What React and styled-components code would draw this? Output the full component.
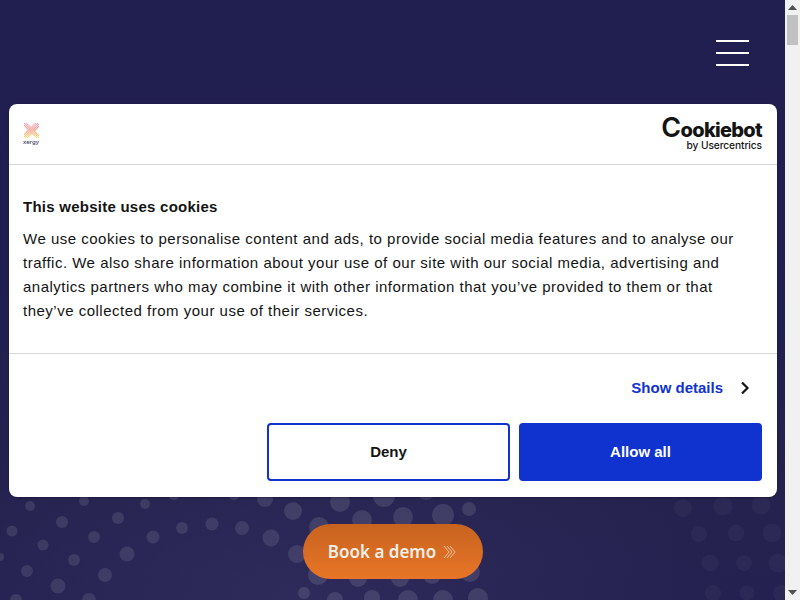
import React from "react";
import styled, { createGlobalStyle } from "styled-components";

const Global = createGlobalStyle`
  html, body { height: 100%; overflow: hidden; }
  body { margin: 0; background: #211f4f; font-family: "Liberation Sans", Arial, sans-serif; }
  #root { height: 100%; }
`;

const Window = styled.div`
  display: flex;
  height: 100%;
`;

const Viewport = styled.main`
  position: relative;
  flex: 1;
  min-width: 0;
  overflow: hidden;
`;

const ScrollBar = styled.aside`
  flex: none;
  width: 15px;
  display: flex;
  flex-direction: column;
  background: #f1f1f1;
`;

const ScrollArrow = styled.div`
  height: 15px;
  flex: none;
  display: flex;
  align-items: center;
  justify-content: center;
`;

const ScrollTrack = styled.div`
  flex: 1;
`;

const ScrollThumb = styled.div`
  width: 11px;
  height: 30px;
  margin: 0 auto;
  background: #c1c1c1;
`;

const Hero = styled.section`
  position: relative;
  height: 600px;
  overflow: hidden;
  display: flex;
  flex-direction: column;
  background:
    radial-gradient(ellipse 420px 190px at 300px 600px, #2e2b5b 0%, rgba(46, 43, 91, 0) 100%),
    linear-gradient(180deg, #211e50 0%, #211f4f 55%, #25224f 85%, #242150 100%);
`;

const DotsLayer = styled.svg`
  position: absolute;
  inset: 0;
  width: 100%;
  height: 100%;
`;

const TopBar = styled.header`
  position: relative;
  display: flex;
  justify-content: flex-end;
  padding: 40px 36px 0 0;
`;

const Burger = styled.button`
  display: flex;
  flex-direction: column;
  gap: 10px;
  width: 33px;
  padding: 0;
  border: 0;
  background: none;
`;

const BurgerLine = styled.span`
  display: block;
  height: 2px;
  background: #fff;
`;

const Cta = styled.a`
  position: relative;
  align-self: center;
  margin-top: auto;
  margin-bottom: 21px;
  width: 180px;
  height: 55px;
  display: flex;
  align-items: center;
  justify-content: center;
  gap: 7px;
  border-radius: 28px;
  background: linear-gradient(180deg, #c7631f 0%, #e87527 100%);
  color: #f3efe9;
  font: 600 17px "Noto Sans", sans-serif;
  letter-spacing: 0;
`;

const Dialog = styled.div`
  position: absolute;
  top: 104px;
  left: 9px;
  width: 768px;
  height: 393px;
  box-sizing: border-box;
  display: flex;
  flex-direction: column;
  background: #fff;
  border-radius: 8px;
  box-shadow: 0 1px 2px rgba(0, 0, 0, 0.3);
  color: #141414;
`;

const DialogHeader = styled.div`
  height: 61px;
  flex: none;
  box-sizing: border-box;
  display: flex;
  align-items: center;
  justify-content: space-between;
  padding: 0 15px 0 14px;
  border-bottom: 1px solid #d6d6d6;
`;

const XergyLogo = styled.div`
  display: flex;
  flex-direction: column;
  align-items: center;
  width: 16px;
`;

const XergyName = styled.span`
  font: 500 6px/6px "Noto Sans", sans-serif;
  color: #3b3a66;
  margin-top: 1px;
`;

const CookiebotLogo = styled.div`
  display: flex;
  flex-direction: column;
  align-items: flex-end;
  color: #141414;
`;

const CookiebotName = styled.span`
  font: 800 20px/20px Inter, sans-serif;
  letter-spacing: -0.7px;
`;

const CookiebotInitial = styled.span`
  font-size: 27px;
  font-weight: 600;
  line-height: 20px;
`;

const CookiebotSub = styled.span`
  font: 500 10.2px/11px Inter, sans-serif;
  letter-spacing: -0.1px;
`;

const DialogBody = styled.div`
  flex: none;
  height: 189px;
  box-sizing: border-box;
  padding: 32px 40px 0 14px;
  border-bottom: 1px solid #d6d6d6;
`;

const Title = styled.h2`
  margin: 0 0 11px;
  font: 700 15px/19px "Liberation Sans", sans-serif;
  letter-spacing: 0.25px;
`;

const Copy = styled.p`
  margin: 0;
  font: 400 15px/24px "Liberation Sans", sans-serif;
  letter-spacing: 0.5px;
`;

const DetailsRow = styled.div`
  display: flex;
  justify-content: flex-end;
  align-items: center;
  gap: 17px;
  height: 68px;
  padding: 0 27px 0 0;
  margin-bottom: 1px;
  flex: none;
`;

const DetailsLink = styled.a`
  font: 700 15px/20px "Liberation Sans", sans-serif;
  color: #1032cf;
`;

const Actions = styled.div`
  display: flex;
  justify-content: flex-end;
  gap: 9px;
  padding-right: 15px;
`;

const Action = styled.button`
  width: 243px;
  height: 58px;
  box-sizing: border-box;
  padding: 0 0 2px;
  border: 2px solid #1032cf;
  border-radius: 4px;
  background: ${(p) => (p.$primary ? "#1032cf" : "#fff")};
  color: ${(p) => (p.$primary ? "#fff" : "#141414")};
  font: 700 15px "Liberation Sans", sans-serif;
`;

const leftDots = [
  [30, 506, 5], [84, 501, 5], [145, 504, 5], [12, 531, 5.5], [62, 522, 6], [118, 518, 6],
  [174, 494, 6], [43, 545, 5.5], [94, 537, 6], [153, 537, 6.5], [0, 557, 4], [74, 560, 6],
  [127, 554, 7.5], [27, 571, 6], [105, 575, 7], [58, 586, 7.5], [16, 600, 6], [89, 600, 7],
  [182, 528, 6], [212, 524, 6.5], [242, 528, 7], [271, 538, 8.5], [297, 554, 9],
  [234, 494, 6], [265, 499, 8],
];
const midDots = [
  [293, 511, 9], [340, 502, 10], [384, 496, 11], [426, 490, 10], [319, 527, 10], [362, 520, 10],
  [403, 517, 10], [443, 515, 11], [469, 509, 7], [318, 575, 10], [358, 578, 9], [400, 578, 9],
  [432, 575, 9], [470, 572, 10], [304, 593, 6], [335, 600, 8], [372, 598, 8], [408, 600, 10],
  [443, 600, 10], [478, 598, 10],
];
const rightDots = [
  [683, 508, 9], [723, 506, 9.5], [761, 505, 9.5], [699, 534, 8], [736, 533, 8.5], [772, 533, 9.5],
  [710, 563, 8.5], [744, 563, 8], [778, 563, 9.5], [713, 593, 8], [747, 593, 7.5], [781, 593, 8],
];

const Dots = () => (
  <DotsLayer viewBox="0 0 785 600" aria-hidden="true">
    {leftDots.map(([x, y, r]) => (
      <circle key={`l${x}${y}`} cx={x} cy={y} r={r} fill="#fff" opacity="0.1" />
    ))}
    {midDots.map(([x, y, r]) => (
      <circle key={`m${x}${y}`} cx={x} cy={y} r={r} fill="#fff" opacity="0.11" />
    ))}
    {rightDots.map(([x, y, r]) => (
      <circle key={`r${x}${y}`} cx={x} cy={y} r={r} fill="#fff" opacity="0.035" />
    ))}
  </DotsLayer>
);

const cells = [];
for (let row = 0; row < 14; row++) {
  for (let col = 0; col < 14; col++) {
    const onX = Math.abs(col - row) <= 3 || Math.abs(col + row - 13) <= 3;
    if (onX && (row + col) % 2 === 0) cells.push([col, row]);
  }
}
const rowColour = (r) => ["#ee8ea2", "#ec7f8c", "#e86a64", "#e8664a", "#ee8c42", "#f4b04a", "#f8cf5c"][Math.floor(r / 2)];

const XergyMark = () => (
  <svg width="15" height="15" viewBox="0 0 14 14" aria-hidden="true">
    {cells.map(([c, r]) => (
      <rect key={`${c}-${r}`} x={c} y={r} width="1" height="1" fill={rowColour(r)} />
    ))}
  </svg>
);

const Chevrons = () => (
  <svg width="14" height="14" viewBox="0 0 14 14" fill="none" stroke="#f6d9c2" strokeWidth="0.8" aria-hidden="true">
    <path d="M1 1l5 6-5 6M4 1l5 6-5 6M7 1l5 6-5 6" />
  </svg>
);

const Caret = () => (
  <svg width="10" height="14" viewBox="0 0 10 14" fill="none" stroke="#141414" strokeWidth="2.2" aria-hidden="true">
    <path d="M2 1.5L7.5 7 2 12.5" />
  </svg>
);

const ArrowIcon = ({ $down }) => (
  <svg width="9" height="5" viewBox="0 0 9 5" fill="#505050" aria-hidden="true">
    <path d={$down ? "M0 0h9L4.5 5z" : "M4.5 0L9 5H0z"} />
  </svg>
);

export default function App() {
  return (
    <Window>
      <Global />
      <Viewport>
        <Hero>
          <Dots />
          <TopBar>
            <Burger aria-label="Menu">
              <BurgerLine />
              <BurgerLine />
              <BurgerLine />
            </Burger>
          </TopBar>
          <Cta>
            Book a demo
            <Chevrons />
          </Cta>
        </Hero>
        <Dialog>
          <DialogHeader>
            <XergyLogo>
              <XergyMark />
              <XergyName>xergy</XergyName>
            </XergyLogo>
            <CookiebotLogo>
              <CookiebotName>
                <CookiebotInitial>C</CookiebotInitial>ookiebot
              </CookiebotName>
              <CookiebotSub>by Usercentrics</CookiebotSub>
            </CookiebotLogo>
          </DialogHeader>
          <DialogBody>
            <Title>This website uses cookies</Title>
            <Copy>
              We use cookies to personalise content and ads, to provide social media features and to analyse our
              traffic. We also share information about your use of our site with our social media, advertising and
              analytics partners who may combine it with other information that you’ve provided to them or that
              they’ve collected from your use of their services.
            </Copy>
          </DialogBody>
          <DetailsRow>
            <DetailsLink>Show details</DetailsLink>
            <Caret />
          </DetailsRow>
          <Actions>
            <Action>Deny</Action>
            <Action $primary>Allow all</Action>
          </Actions>
        </Dialog>
      </Viewport>
      <ScrollBar>
        <ScrollArrow>
          <ArrowIcon />
        </ScrollArrow>
        <ScrollTrack>
          <ScrollThumb />
        </ScrollTrack>
        <ScrollArrow>
          <ArrowIcon $down />
        </ScrollArrow>
      </ScrollBar>
    </Window>
  );
}
